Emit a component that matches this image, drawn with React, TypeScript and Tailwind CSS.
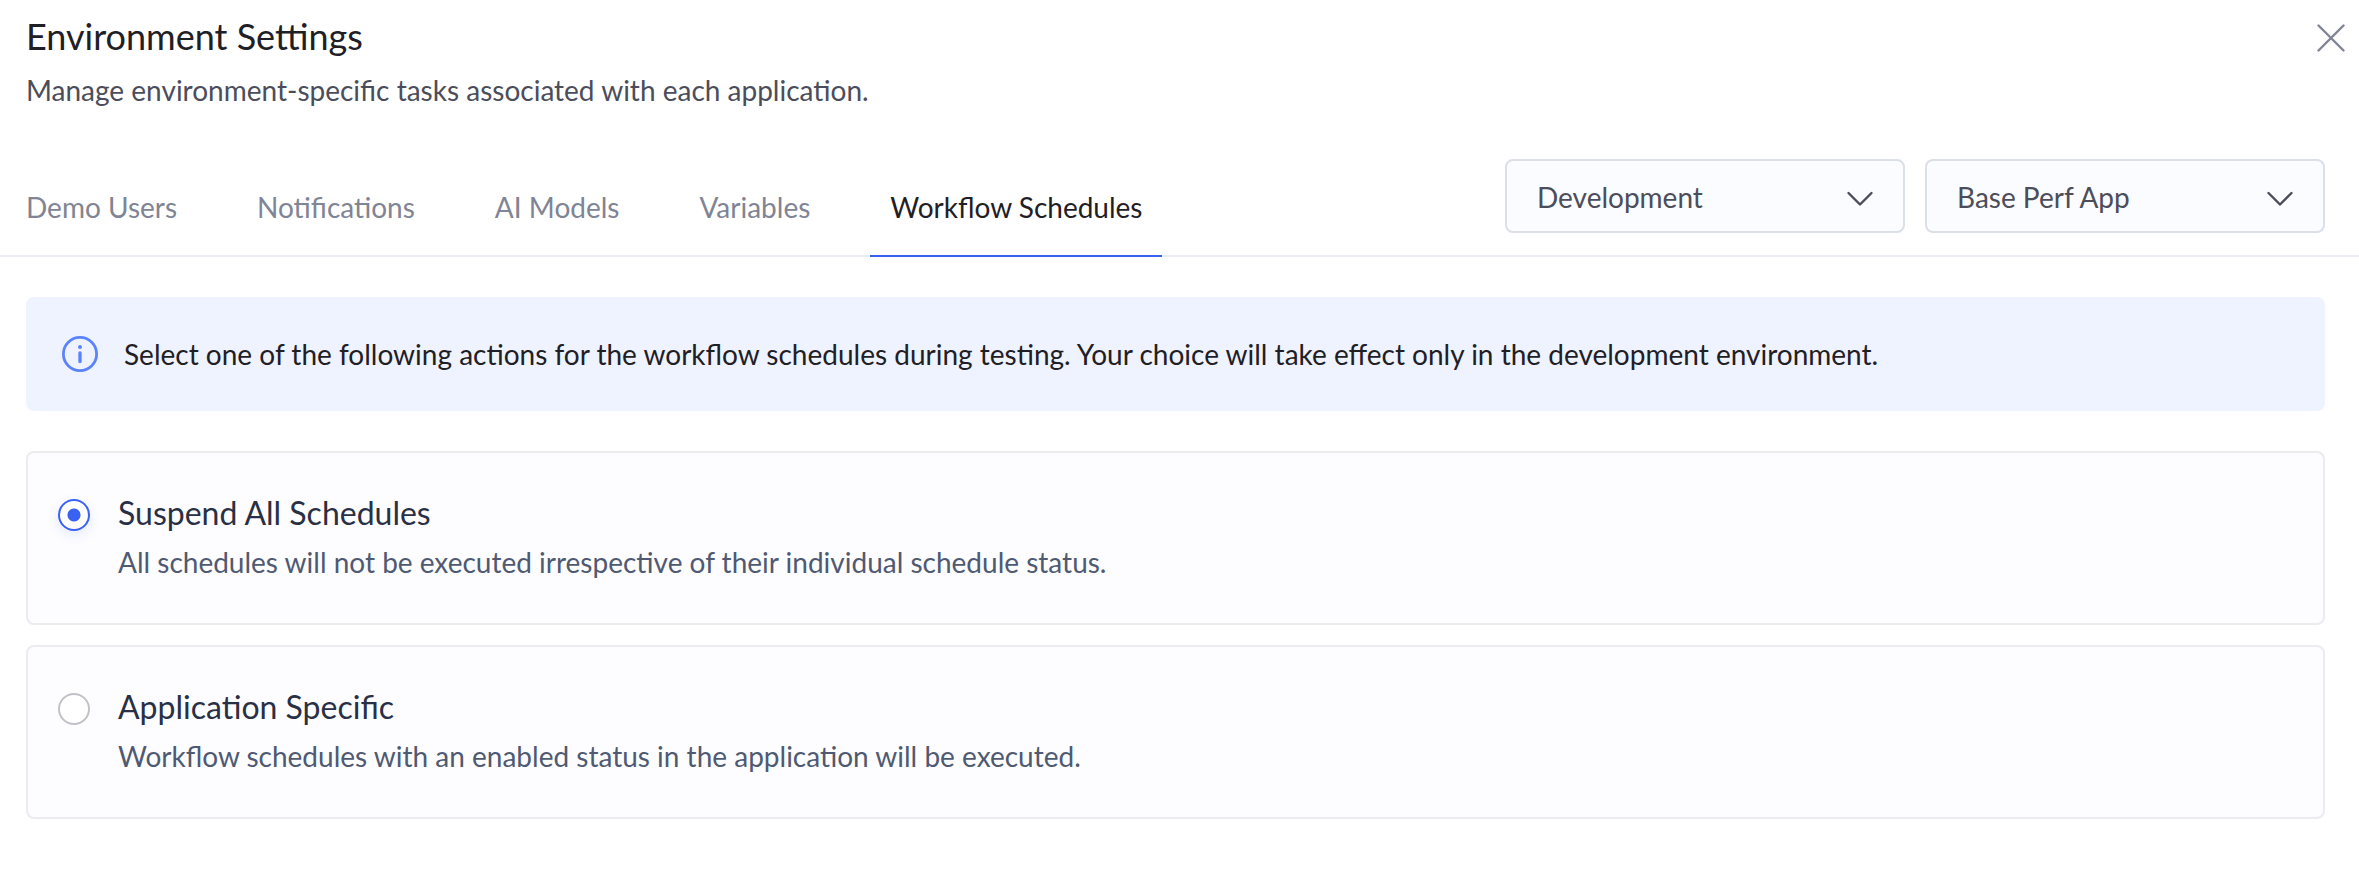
import { useState } from "react";

const tabs = [
  "Demo Users",
  "Notifications",
  "AI Models",
  "Variables",
  "Workflow Schedules",
];

const scheduleOptions = [
  {
    id: "suspend",
    title: "Suspend All Schedules",
    description:
      "All schedules will not be executed irrespective of their individual schedule status.",
  },
  {
    id: "application",
    title: "Application Specific",
    description:
      "Workflow schedules with an enabled status in the application will be executed.",
  },
];

const Dropdown = ({ label, options }: { label: string; options: string[] }) => (
  <div className="relative w-[400px]">
    <select
      aria-label={label}
      className="block w-full h-[74px] pt-0.5 pl-[30px] pr-20 appearance-none rounded-lg border-2 border-[#dbdfe7] bg-[#fbfcff] text-[28px] leading-9 text-[#4c4d5b]"
    >
      {options.map((option) => (
        <option key={option}>{option}</option>
      ))}
    </select>
    <svg
      viewBox="0 0 28 16"
      className="absolute right-[31px] top-8 w-7 h-4 pointer-events-none"
      fill="none"
      stroke="#4c4d5b"
      strokeWidth="2.4"
      strokeLinecap="round"
      strokeLinejoin="round"
    >
      <path d="M2.5 2l11.5 11.5L25.500 2" />
    </svg>
  </div>
);

const InfoIcon = () => (
  <svg viewBox="0 0 36 36" className="w-9 h-9 shrink-0" fill="none">
    <circle cx="18" cy="18" r="16.6" stroke="#5b84fb" strokeWidth="2.8" />
    <circle cx="18" cy="11" r="2" fill="#5b84fb" />
    <path d="M18 17v8.500" stroke="#5b84fb" strokeWidth="3.4" strokeLinecap="round" />
  </svg>
);

export default function App() {
  const [activeTab, setActiveTab] = useState("Workflow Schedules");
  const [selected, setSelected] = useState("suspend");

  return (
    <div className="min-h-screen bg-white font-[Lato,sans-serif] text-[28px] leading-9 text-[#1f2026]">
      {/* Header */}
      <header className="flex items-start justify-between pl-[26px] pr-[14px] pt-[14px]">
        <div>
          <h1 className="text-[36px] leading-[44px]">Environment Settings</h1>
          <p className="mt-[14px] text-[#4c4d5b]">
            Manage environment-specific tasks associated with each application.
          </p>
        </div>
        <button aria-label="Close" className="mt-[10px]">
          <svg
            viewBox="0 0 28 28"
            className="w-7 h-7"
            fill="none"
            stroke="#808494"
            strokeWidth="2.4"
            strokeLinecap="round"
          >
            <path d="M1.5 1.5l25 25M26.5 1.5l-25 25" />
          </svg>
        </button>
      </header>

      {/* Tabs and filters */}
      <div className="mt-[51px] flex items-end justify-between border-b-2 border-[#ebeff5] pl-[6px] pr-[34px]">
        <nav className="-mb-0.5 flex gap-10">
          {tabs.map((tab) => (
            <button
              key={tab}
              onClick={() => setActiveTab(tab)}
              className={`px-5 pb-[30px] border-b-2 ${
                tab === activeTab
                  ? "border-[#3a62f2] text-[#1f2026]"
                  : "border-transparent text-[#808494]"
              }`}
            >
              {tab}
            </button>
          ))}
        </nav>
        <div className="mb-[22px] flex gap-5">
          <Dropdown
            label="Environment"
            options={["Development", "Staging", "Production"]}
          />
          <Dropdown label="Application" options={["Base Perf App"]} />
        </div>
      </div>

      <main className="pt-10 pb-10 pl-[26px] pr-[34px]">
        <div className="flex items-center gap-[26px] rounded-lg bg-[#eff3ff] px-9 py-[39px]">
          <InfoIcon />
          <p>
            Select one of the following actions for the workflow schedules
            during testing. Your choice will take effect only in the
            development environment.
          </p>
        </div>

        <div className="mt-10 flex flex-col gap-5">
          {scheduleOptions.map((option) => (
            <label
              key={option.id}
              className="flex items-start gap-7 rounded-lg border-2 border-[#ebecf0] bg-[#fdfdff] px-[30px] pt-10 pb-[43px]"
            >
              <input
                type="radio"
                name="schedule"
                checked={selected === option.id}
                onChange={() => setSelected(option.id)}
                className="mt-1.5 w-8 h-8 shrink-0 appearance-none rounded-full border-2 border-[#c1c1c8] bg-white checked:border-[#3a62f2] checked:bg-[radial-gradient(circle,#3a62f2_6px,white_7px)] checked:shadow-[0_4px_12px_rgba(58,98,242,0.12)]"
              />
              <span>
                <span className="block text-[32px] leading-10 text-[#293045]">
                  {option.title}
                </span>
                <span className="mt-[11px] block text-[#4f5a72]">
                  {option.description}
                </span>
              </span>
            </label>
          ))}
        </div>
      </main>
    </div>
  );
}
